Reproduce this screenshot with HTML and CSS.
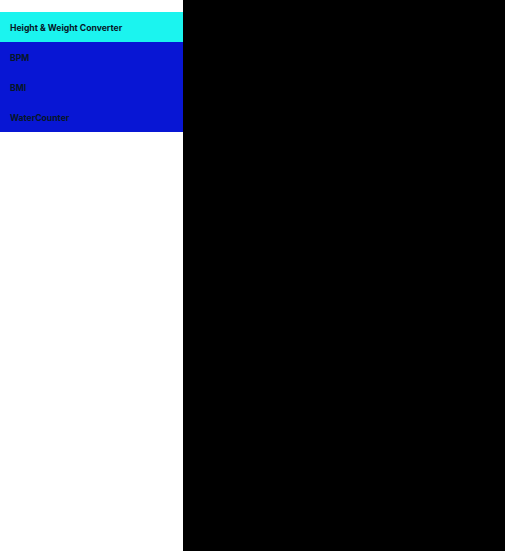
FILE: index.html
```html
<!DOCTYPE html>
<html lang="en">
<head>
<meta charset="utf-8">
<title>Health Tools</title>
<link rel="stylesheet" href="styles.css">
</head>
<body>
<div class="app">
  <nav class="sidebar">
    <a class="nav-item active" href="#">Height &amp; Weight Converter</a>
    <a class="nav-item" href="#">BPM</a>
    <a class="nav-item" href="#">BMI</a>
    <a class="nav-item" href="#">WaterCounter</a>
  </nav>
  <main class="content"></main>
</div>
</body>
</html>
```
FILE: styles.css
```css
html, body {
  margin: 0;
  padding: 0;
  height: 100%;
}
body {
  font-family: Inter, "Liberation Sans", sans-serif;
  background: #ffffff;
}
.app {
  display: flex;
  height: 100%;
}
.sidebar {
  width: 183px;
  flex: 0 0 183px;
  padding-top: 12px;
  display: flex;
  flex-direction: column;
  background: #ffffff;
}
.nav-item {
  display: flex;
  align-items: center;
  height: 30px;
  padding-left: 10px;
  padding-top: 1px;
  font-size: 8.65px;
  font-weight: 700;
  color: #061628;
  text-decoration: none;
  background: #0816d4;
  box-sizing: border-box;
}
.nav-item.active {
  background: #1bf4ef;
}
.content {
  flex: 1;
  background: #000000;
}
```
